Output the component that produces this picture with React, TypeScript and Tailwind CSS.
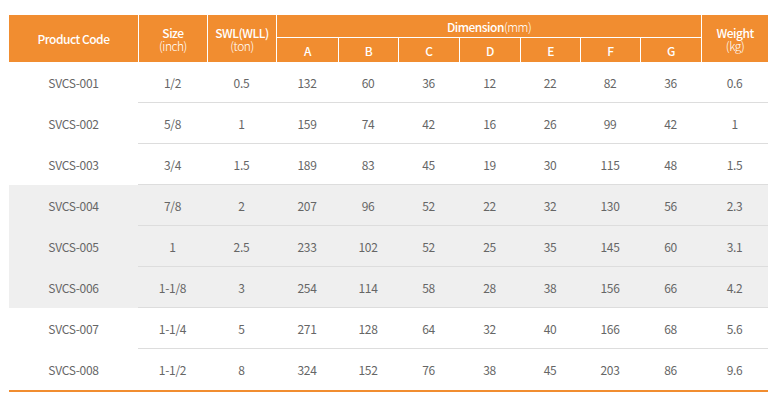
import React from "react";

const rows = [
  ["SVCS-001", "1/2", "0.5", "132", "60", "36", "12", "22", "82", "36", "0.6"],
  ["SVCS-002", "5/8", "1", "159", "74", "42", "16", "26", "99", "42", "1"],
  ["SVCS-003", "3/4", "1.5", "189", "83", "45", "19", "30", "115", "48", "1.5"],
  ["SVCS-004", "7/8", "2", "207", "96", "52", "22", "32", "130", "56", "2.3"],
  ["SVCS-005", "1", "2.5", "233", "102", "52", "25", "35", "145", "60", "3.1"],
  ["SVCS-006", "1-1/8", "3", "254", "114", "58", "28", "38", "156", "66", "4.2"],
  ["SVCS-007", "1-1/4", "5", "271", "128", "64", "32", "40", "166", "68", "5.6"],
  ["SVCS-008", "1-1/2", "8", "324", "152", "76", "38", "45", "203", "86", "9.6"],
];

const widths = [129, 69, 69, 62, 60, 61, 61, 60, 60, 61, 67];

const th = "border-l border-white font-medium text-center align-middle leading-[13px] p-0 tracking-[-0.5px]";

export default function App() {
  return (
    <div
      className="w-[781px] h-[400px] bg-white pt-[15px] pl-[9px]"
      style={{ fontFamily: '"Noto Sans CJK KR", "Noto Sans", sans-serif' }}
    >
      <table className="table-fixed w-[759px] border-separate border-spacing-0 text-[12px]">
        <colgroup>
          {widths.map((w, i) => (
            <col key={i} style={{ width: w }} />
          ))}
        </colgroup>
        <thead>
          <tr className="bg-[#f18d30] text-white">
            <th rowSpan={2} className="font-medium text-center align-middle leading-[13px] p-0 tracking-[-0.5px]">
              Product Code
            </th>
            <th rowSpan={2} className={th}>
              Size
              <br />
              <span className="font-light">(inch)</span>
            </th>
            <th rowSpan={2} className={th}>
              SWL(WLL)
              <br />
              <span className="font-light">(ton)</span>
            </th>
            <th colSpan={7} className={"h-[23px] border-b " + th}>
              Dimension<span className="font-light">(mm)</span>
            </th>
            <th rowSpan={2} className={th}>
              Weight
              <br />
              <span className="font-light">(kg)</span>
            </th>
          </tr>
          <tr className="bg-[#f18d30] text-white">
            {["A", "B", "C", "D", "E", "F", "G"].map((l) => (
              <th key={l} className={"h-[24px] " + th}>
                {l}
              </th>
            ))}
          </tr>
        </thead>
        <tbody>
          {rows.map((r, ri) => {
            const gray = ri >= 3 && ri <= 5;
            const last = ri === rows.length - 1;
            return (
              <tr key={ri} className={gray ? "bg-[#efefef]" : "bg-white"}>
                {r.map((c, ci) => (
                  <td
                    key={ci}
                    className={
                      "p-0 text-center align-middle text-[#666] leading-[13px] tracking-[-0.3px] " +
                      (last
                        ? "h-[43px] border-b-2 border-[#f18d30]"
                        : ci === 0
                        ? "h-[41px]"
                        : "h-[41px] border-b border-[#dddddd]")
                    }
                  >
                    {c}
                  </td>
                ))}
              </tr>
            );
          })}
        </tbody>
      </table>
    </div>
  );
}
